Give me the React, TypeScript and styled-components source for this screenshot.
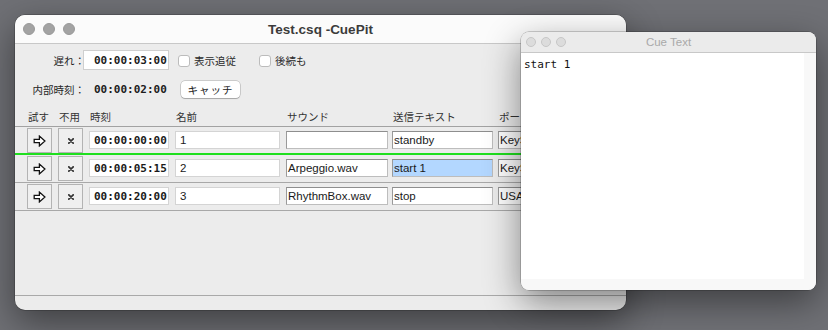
import React from 'react'
import styled, { createGlobalStyle } from 'styled-components'

const CJK = `"Noto Sans CJK JP", "Liberation Sans", sans-serif`
const SANS = `"Liberation Sans", "Noto Sans CJK JP", sans-serif`
const MONO = `"DejaVu Sans Mono", "Liberation Mono", monospace`

const GlobalStyle = createGlobalStyle`
  html, body { margin: 0; padding: 0; }
  body { font-family: ${SANS}; color: #222; }
`

const Desktop = styled.div`
  position: relative;
  width: 828px;
  height: 330px;
  overflow: hidden;
  background: #6f7075;
`

const Window = styled.div<{ $x: number; $y: number; $w: number; $h: number; $radius: number }>`
  position: absolute;
  left: ${p => p.$x}px;
  top: ${p => p.$y}px;
  width: ${p => p.$w}px;
  height: ${p => p.$h}px;
  border-radius: ${p => p.$radius}px;
  overflow: hidden;
  display: flex;
  flex-direction: column;
  background: #ececec;
  box-shadow: 0 0 0 0.5px rgba(0, 0, 0, 0.35), 0 12px 36px rgba(0, 0, 0, 0.45);
`

const TitleBar = styled.div<{ $h: number; $bg: string }>`
  flex: none;
  height: ${p => p.$h}px;
  display: grid;
  grid-template-columns: 1fr auto 1fr;
  align-items: center;
  background: ${p => p.$bg};
  border-bottom: 1px solid #c8c8c8;
`

const Lights = styled.div<{ $pad: number; $gap: number }>`
  display: flex;
  gap: ${p => p.$gap}px;
  padding-left: ${p => p.$pad}px;
`

const Light = styled.span<{ $size: number; $fill: string; $ring: string }>`
  width: ${p => p.$size}px;
  height: ${p => p.$size}px;
  box-sizing: border-box;
  border-radius: 50%;
  background: ${p => p.$fill};
  border: 1px solid ${p => p.$ring};
`

const Title = styled.div<{ $bold?: boolean }>`
  font-family: ${SANS};
  font-size: ${p => (p.$bold ? '13.5px' : '11.5px')};
  font-weight: ${p => (p.$bold ? 700 : 400)};
  color: ${p => (p.$bold ? '#3b3b3b' : '#a9a9a9')};
  white-space: nowrap;
`

/* ---------- main window ---------- */

const Form = styled.div`
  padding: 6px 0 7px 0;
  display: flex;
  flex-direction: column;
  gap: 9px;
`

const FormRow = styled.div`
  height: 20px;
  display: flex;
  align-items: center;
`

const FormLabel = styled.div`
  width: 70px;
  margin-right: -2px;
  text-align: right;
  font-family: ${CJK};
  font-size: 10.5px;
  color: #262626;
  white-space: nowrap;
`

const TimeBox = styled.div<{ $boxed?: boolean }>`
  width: 86px;
  height: 20px;
  box-sizing: border-box;
  padding-left: 10px;
  display: flex;
  align-items: center;
  font-family: ${MONO};
  font-size: 11px;
  font-weight: 700;
  color: #1c1c1c;
  background: ${p => (p.$boxed ? '#fff' : 'transparent')};
  border: 1px solid ${p => (p.$boxed ? '#cfcfcf' : 'transparent')};
`

const Check = styled.label<{ $gap: number }>`
  display: flex;
  align-items: center;
  gap: 4px;
  margin-left: ${p => p.$gap}px;
  font-family: ${CJK};
  font-size: 10.5px;
  color: #2a2a2a;
`

const Box = styled.span`
  width: 12px;
  height: 12px;
  box-sizing: border-box;
  border-radius: 3px;
  background: #fff;
  border: 1px solid #bcbcbc;
  margin-top: 2px;
`

const PushButton = styled.div`
  margin-left: 12px;
  width: 59px;
  height: 17px;
  display: flex;
  align-items: center;
  justify-content: center;
  background: #fff;
  border-radius: 4px;
  box-shadow: 0 0 0 0.5px rgba(0, 0, 0, 0.28), 0 1px 1px rgba(0, 0, 0, 0.18);
  font-family: ${CJK};
  font-size: 10.5px;
  letter-spacing: 1px;
  color: #222;
`

const COLS = '31px 31px 86px 111px 106px 106px 1fr'

const HeaderRow = styled.div`
  height: 20px;
  display: grid;
  grid-template-columns: ${COLS};
  align-items: center;
  padding-left: 12px;
  border-bottom: 1px solid #a2a2a2;
  font-family: ${CJK};
  font-size: 10.5px;
  color: #333;
  white-space: nowrap;
`

const HeadCell = styled.div`
  padding-left: 1px;
  overflow: hidden;
`

const CueRow = styled.div<{ $current?: boolean }>`
  height: 28px;
  box-sizing: border-box;
  display: grid;
  grid-template-columns: ${COLS};
  align-items: start;
  padding: 1px 0 0 12px;
  border-bottom: ${p => (p.$current ? '2px solid #1fe01f' : '1px solid #a8a8a8')};
`

const SquareButton = styled.div`
  width: 25px;
  height: 25px;
  box-sizing: border-box;
  display: flex;
  align-items: center;
  justify-content: center;
  background: #efefef;
  border: 1px solid #b3b3b3;
`

type FieldKind = 'mono' | 'plain' | 'bezel'

const Field = styled.div<{ $w?: number; $kind: FieldKind; $selected?: boolean }>`
  margin-top: 3px;
  width: ${p => (p.$w ? `${p.$w}px` : '100%')};
  height: 18px;
  box-sizing: border-box;
  display: flex;
  align-items: center;
  overflow: hidden;
  white-space: nowrap;
  padding-left: ${p => (p.$kind === 'bezel' ? '1px' : '4px')};
  background: ${p => (p.$selected ? '#b3d7ff' : '#fff')};
  border: 1px solid ${p => (p.$kind === 'bezel' ? '#bdbdbd' : '#d4d4d4')};
  border-top-color: ${p => (p.$kind === 'bezel' ? '#8e8e8e' : '#d4d4d4')};
  border-left-color: ${p => (p.$kind === 'bezel' ? '#9a9a9a' : '#d4d4d4')};
  font-family: ${p => (p.$kind === 'mono' ? MONO : SANS)};
  font-size: ${p => (p.$kind === 'mono' ? '11px' : '11.5px')};
  font-weight: ${p => (p.$kind === 'mono' ? 700 : 400)};
  color: #1a1a1a;
`

const Spacer = styled.div`
  flex: 1;
`

const BottomBar = styled.div`
  flex: none;
  height: 14px;
  border-top: 1px solid #a9a9a9;
`

/* ---------- cue text window ---------- */

const TextPane = styled.div`
  flex: 1;
  display: grid;
  grid-template-columns: 1fr 12px;
  grid-template-rows: 1fr 11px;
  background: #f8f8f8;
`

const TextArea = styled.div`
  background: #fff;
  padding: 5px 3px;
  font-family: ${MONO};
  font-size: 11px;
  color: #111;
  white-space: pre;
`

const ArrowIcon = () => (
  <svg width="13" height="12" viewBox="0 0 13 12">
    <path
      d="M1.2 4.3 H6.4 V1.1 L11.9 6 L6.4 10.9 V7.7 H1.2 Z"
      fill="#fff"
      stroke="#111"
      strokeWidth="1.3"
      strokeLinejoin="miter"
    />
  </svg>
)

const CrossIcon = () => (
  <svg width="6" height="6" viewBox="0 0 6 6">
    <path d="M0.8 0.8 L5.2 5.2 M5.2 0.8 L0.8 5.2" stroke="#333" strokeWidth="1.7" strokeLinecap="round" />
  </svg>
)

const cues = [
  { time: '00:00:00:00', name: '1', sound: '', text: 'standby', port: 'KeySerial1' },
  { time: '00:00:05:15', name: '2', sound: 'Arpeggio.wav', text: 'start 1', port: 'KeySerial1' },
  { time: '00:00:20:00', name: '3', sound: 'RhythmBox.wav', text: 'stop', port: 'USA19QW1P1.1' }
]

const headers = ['試す', '不用', '時刻', '名前', 'サウンド', '送信テキスト', 'ポート']

export default function App() {
  return (
    <Desktop>
      <GlobalStyle />
      <Window $x={15} $y={15} $w={611} $h={295} $radius={10}>
        <TitleBar $h={28} $bg="#fbfbfb">
          <Lights $pad={8} $gap={8}>
            <Light $size={12} $fill="#a3a3a3" $ring="#999" />
            <Light $size={12} $fill="#a3a3a3" $ring="#999" />
            <Light $size={12} $fill="#a3a3a3" $ring="#999" />
          </Lights>
          <Title $bold>Test.csq -CuePit</Title>
          <div />
        </TitleBar>

        <Form>
          <FormRow>
            <FormLabel>遅れ：</FormLabel>
            <TimeBox $boxed>00:00:03:00</TimeBox>
            <Check $gap={9}>
              <Box />
              表示追従
            </Check>
            <Check $gap={23}>
              <Box />
              後続も
            </Check>
          </FormRow>
          <FormRow>
            <FormLabel>内部時刻：</FormLabel>
            <TimeBox>00:00:02:00</TimeBox>
            <PushButton>キャッチ</PushButton>
          </FormRow>
        </Form>

        <HeaderRow>
          {headers.map(h => (
            <HeadCell key={h}>{h}</HeadCell>
          ))}
        </HeaderRow>

        {cues.map((c, i) => (
          <CueRow key={c.name} $current={i === 0}>
            <SquareButton>
              <ArrowIcon />
            </SquareButton>
            <SquareButton>
              <CrossIcon />
            </SquareButton>
            <Field $w={80} $kind="mono">{c.time}</Field>
            <Field $w={105} $kind="plain">{c.name}</Field>
            <Field $w={102} $kind="bezel">{c.sound}</Field>
            <Field $w={101} $kind="bezel" $selected={i === 1}>{c.text}</Field>
            <Field $w={100} $kind="bezel">{c.port}</Field>
          </CueRow>
        ))}

        <Spacer />
        <BottomBar />
      </Window>

      <Window $x={521} $y={32} $w={295} $h={258} $radius={8}>
        <TitleBar $h={20} $bg="#ebebeb">
          <Lights $pad={5} $gap={5}>
            <Light $size={10} $fill="#dcdcdc" $ring="#c6c6c6" />
            <Light $size={10} $fill="#dcdcdc" $ring="#c6c6c6" />
            <Light $size={10} $fill="#dcdcdc" $ring="#c6c6c6" />
          </Lights>
          <Title>Cue Text</Title>
          <div />
        </TitleBar>
        <TextPane>
          <TextArea>start 1</TextArea>
        </TextPane>
      </Window>
    </Desktop>
  )
}
